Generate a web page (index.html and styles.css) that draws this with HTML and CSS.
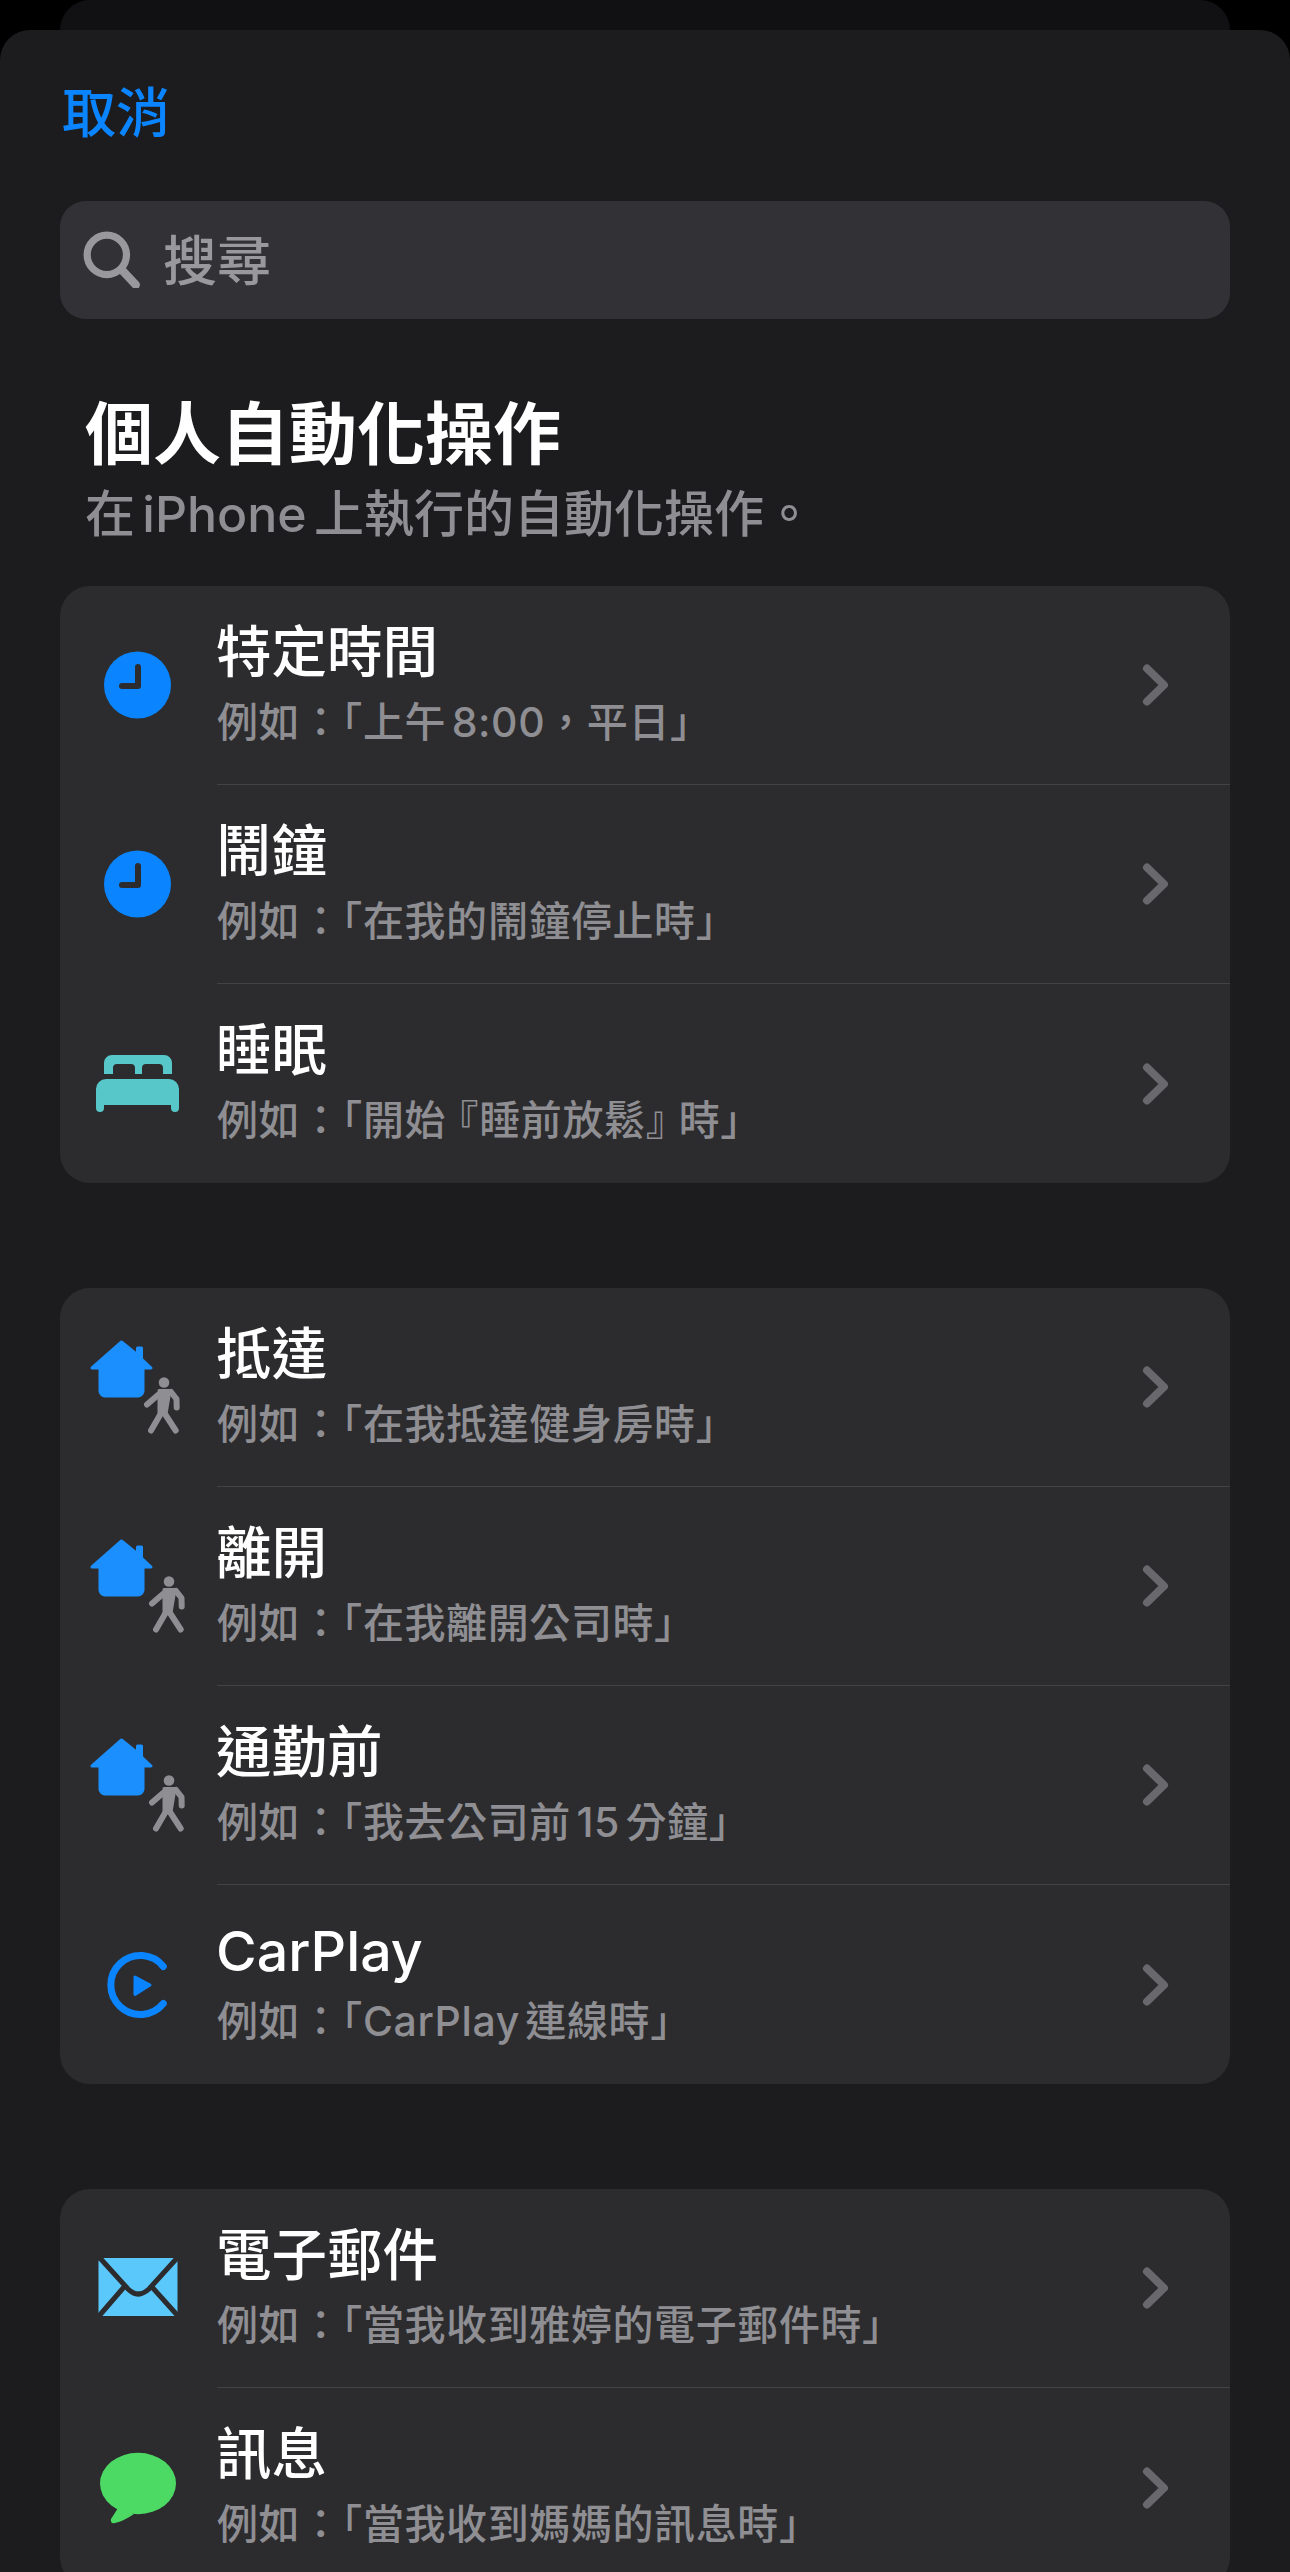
FILE: index.html
```html
<!DOCTYPE html>
<html lang="zh-Hant">
<head>
    <meta charset="UTF-8" />
    <title>個人自動化操作</title>
    <meta name="viewport" content="width=device-width, initial-scale=1" />
    <link rel="stylesheet" href="styles.css">
</head>
<body>
    <!-- Shared icons, all drawn in the same 157x120 slot -->
    <svg class="defs" width="0" height="0">
        <defs>
            <symbol id="i-clock" viewBox="0 0 157 120">
                <circle cx="77.5" cy="59" r="33.5" fill="#0a84ff"/>
                <path d="M78 41V60H62" fill="none" stroke="#2c2c2e" stroke-width="6" stroke-linecap="round" stroke-linejoin="round"/>
            </symbol>
            <symbol id="i-bed" viewBox="0 0 157 120">
                <path fill="#58c7c9" d="M44 50V39a8 8 0 0 1 8-8h52a8 8 0 0 1 8 8v11h-9v-6a4 4 0 0 0-4-4H86a4 4 0 0 0-4 4v6h-7v-6a4 4 0 0 0-4-4H57a4 4 0 0 0-4 4v6z"/>
                <path fill="#58c7c9" d="M46 55h63a10 10 0 0 1 10 10v19a4 4 0 0 1-8 0v-3H44v3a4 4 0 0 1-8 0V65a10 10 0 0 1 10-10z"/>
            </symbol>
            <symbol id="i-home" viewBox="0 0 157 120">
                <path fill="#1c8fff" stroke="#1c8fff" stroke-width="3" stroke-linejoin="round" d="M61.5 14 77.5 27V20h4v11L91 40H83V63a5 5 0 0 1-5 5H45a5 5 0 0 1-5-5V40H32z"/>
            </symbol>
            <symbol id="i-walk" viewBox="0 0 157 120">
                <g fill="none" stroke="#8e8e93" stroke-linecap="round" stroke-linejoin="round">
                    <path stroke-width="6" d="M98 67 87 76.5M111 64 116.5 71 116.7 79.5"/>
                    <path stroke-width="3" fill="#8e8e93" d="M99 62.5H110L106 86H99z"/>
                    <path stroke-width="6" d="M100 87 91 102.5M105 86 115.7 102.5"/>
                </g>
                <circle cx="104" cy="54.5" r="5.3" fill="#8e8e93"/>
            </symbol>
            <symbol id="i-carplay" viewBox="0 0 157 120">
                <path d="M103.3 41.5A29.5 29.5 0 1 0 103.3 78.5" fill="none" stroke="#0a84ff" stroke-width="7" stroke-linecap="round"/>
                <path d="M75 52 90 60 75 69.5z" fill="#0a84ff" stroke="#0a84ff" stroke-width="3" stroke-linejoin="round"/>
            </symbol>
            <symbol id="i-mail" viewBox="0 0 157 120">
                <rect x="38.5" y="29" width="79" height="58" rx="4" fill="#5ac8fa"/>
                <path d="M39 28 68 60Q78 70 89 60L118 28M39 87 64 58M118 87 92 58" fill="none" stroke="#2c2c2e" stroke-width="5"/>
            </symbol>
            <symbol id="i-message" viewBox="0 0 157 120">
                <ellipse cx="78" cy="55.5" rx="38" ry="30.7" fill="#4cd964"/>
                <path d="M58 80 51 91Q50 96 55 95 64 93 74 86z" fill="#4cd964"/>
            </symbol>
            <symbol id="i-chevron" viewBox="0 0 30 48">
                <path d="M7 7.5 24 24 7 40.5" fill="none" stroke="#68686d" stroke-width="8" stroke-linecap="round" stroke-linejoin="round"/>
            </symbol>
        </defs>
    </svg>

    <div class="back-card"></div>
    <div class="sheet">
        <div class="cancel">取消</div>

        <div class="search">
            <svg class="search-icon" viewBox="0 0 56 56">
                <circle cx="23" cy="24" r="19" fill="none" stroke="#98989d" stroke-width="7"/>
                <path d="M37 38 51 53" fill="none" stroke="#98989d" stroke-width="8" stroke-linecap="round"/>
            </svg>
            <span class="search-label">搜尋</span>
        </div>

        <h1 class="title">個人自動化操作</h1>
        <p class="subtitle">在 iPhone 上執行的自動化操作。</p>

        <!-- Time -->
        <div class="group">
            <div class="row">
                <svg class="row-icon"><use href="#i-clock"/></svg>
                <div class="row-body">
                    <div class="row-text"><div class="row-title">特定時間</div><div class="row-sub">例如：「上午 8:00，平日」</div></div>
                    <svg class="chevron"><use href="#i-chevron"/></svg>
                </div>
            </div>
            <div class="row">
                <svg class="row-icon"><use href="#i-clock"/></svg>
                <div class="row-body">
                    <div class="row-text"><div class="row-title">鬧鐘</div><div class="row-sub">例如：「在我的鬧鐘停止時」</div></div>
                    <svg class="chevron"><use href="#i-chevron"/></svg>
                </div>
            </div>
            <div class="row">
                <svg class="row-icon"><use href="#i-bed"/></svg>
                <div class="row-body">
                    <div class="row-text"><div class="row-title">睡眠</div><div class="row-sub">例如：「開始<span class="quote-open">『</span>睡前放鬆<span class="quote-close">』</span>時」</div></div>
                    <svg class="chevron"><use href="#i-chevron"/></svg>
                </div>
            </div>
        </div>

        <!-- Place -->
        <div class="group">
            <div class="row">
                <svg class="row-icon"><use href="#i-home"/><use href="#i-walk"/></svg>
                <div class="row-body">
                    <div class="row-text"><div class="row-title">抵達</div><div class="row-sub">例如：「在我抵達健身房時」</div></div>
                    <svg class="chevron"><use href="#i-chevron"/></svg>
                </div>
            </div>
            <div class="row">
                <svg class="row-icon"><use href="#i-home"/><use href="#i-walk" x="5"/></svg>
                <div class="row-body">
                    <div class="row-text"><div class="row-title">離開</div><div class="row-sub">例如：「在我離開公司時」</div></div>
                    <svg class="chevron"><use href="#i-chevron"/></svg>
                </div>
            </div>
            <div class="row">
                <svg class="row-icon"><use href="#i-home"/><use href="#i-walk" x="5"/></svg>
                <div class="row-body">
                    <div class="row-text"><div class="row-title">通勤前</div><div class="row-sub">例如：「我去公司前 15 分鐘」</div></div>
                    <svg class="chevron"><use href="#i-chevron"/></svg>
                </div>
            </div>
            <div class="row">
                <svg class="row-icon"><use href="#i-carplay"/></svg>
                <div class="row-body">
                    <div class="row-text"><div class="row-title">CarPlay</div><div class="row-sub">例如：「CarPlay 連線時」</div></div>
                    <svg class="chevron"><use href="#i-chevron"/></svg>
                </div>
            </div>
        </div>

        <!-- Communication -->
        <div class="group">
            <div class="row">
                <svg class="row-icon"><use href="#i-mail"/></svg>
                <div class="row-body">
                    <div class="row-text"><div class="row-title">電子郵件</div><div class="row-sub">例如：「當我收到雅婷的電子郵件時」</div></div>
                    <svg class="chevron"><use href="#i-chevron"/></svg>
                </div>
            </div>
            <div class="row">
                <svg class="row-icon"><use href="#i-message"/></svg>
                <div class="row-body">
                    <div class="row-text"><div class="row-title">訊息</div><div class="row-sub">例如：「當我收到媽媽的訊息時」</div></div>
                    <svg class="chevron"><use href="#i-chevron"/></svg>
                </div>
            </div>
        </div>
    </div>
</body>
</html>
```

FILE: styles.css
```css
html, body {
    height: 100%;
    margin: 0;
    padding: 0;
    overflow: hidden;
}
body {
    background: #000;
    font-family: Inter, 'Noto Sans CJK TC', sans-serif;
    color: #fff;
}
.defs {
    display: block;
}
/* Card peeking out behind the sheet */
.back-card {
    height: 30px;
    margin: 0 60px;
    background: #111113;
    border-radius: 30px 30px 0 0;
}
.sheet {
    height: 2542px;
    padding: 0 60px;
    box-sizing: border-box;
    background: #1c1c1e;
    border-radius: 30px 30px 0 0;
    overflow: hidden;
}
.cancel {
    margin: 45px 0 0 2px;
    height: 75px;
    font-size: 54px;
    line-height: 78px;
    font-weight: 500;
    color: #0a84ff;
}
.search {
    display: flex;
    align-items: center;
    height: 118px;
    margin-top: 51px;
    padding-left: 23px;
    background: #323236;
    border-radius: 26px;
    font-size: 54px;
    font-weight: 500;
    color: #98989d;
}
.search-icon {
    width: 58px;
    height: 58px;
    margin: 0 22px 2px 0;
}
.search-label {
    padding-bottom: 6px;
}
.title {
    margin: 67px 0 0 25px;
    font-size: 68px;
    line-height: 96px;
    font-weight: 700;
}
.subtitle {
    margin: -5px 0 0 25px;
    font-size: 50px;
    line-height: 74px;
    font-weight: 500;
    word-spacing: -6px;
    color: #8e8e93;
}
.group {
    margin-top: 105px;
    background: #2c2c2e;
    border-radius: 30px;
    overflow: hidden;
}
.subtitle + .group {
    margin-top: 35px;
}
.row {
    display: flex;
    align-items: center;
    height: 199px;
}
.row-icon {
    flex: none;
    width: 157px;
    height: 120px;
}
.row-body {
    flex: 1;
    display: flex;
    align-items: center;
    justify-content: space-between;
    height: 100%;
    box-sizing: border-box;
    border-bottom: 1px solid #434346;
}
.row:last-child .row-body {
    border-bottom: none;
}
.row-text {
    padding-bottom: 3px;
}
.row-title {
    margin-left: -1px;
    font-size: 55.5px;
    line-height: 72px;
    font-weight: 500;
}
.row-sub {
    margin-top: 4px;
    font-size: 41px;
    line-height: 60px;
    font-weight: 500;
    letter-spacing: .6px;
    word-spacing: -6px;
    color: #8e8e93;
}
/* The double brackets sit tighter than a full em in the original */
.quote-open, .quote-close {
    font-feature-settings: "halt";
}
.quote-open {
    padding-left: 12px;
}
.quote-close {
    padding-right: 12px;
}
.chevron {
    flex: none;
    width: 30px;
    height: 48px;
    margin-right: 60px;
}
```
